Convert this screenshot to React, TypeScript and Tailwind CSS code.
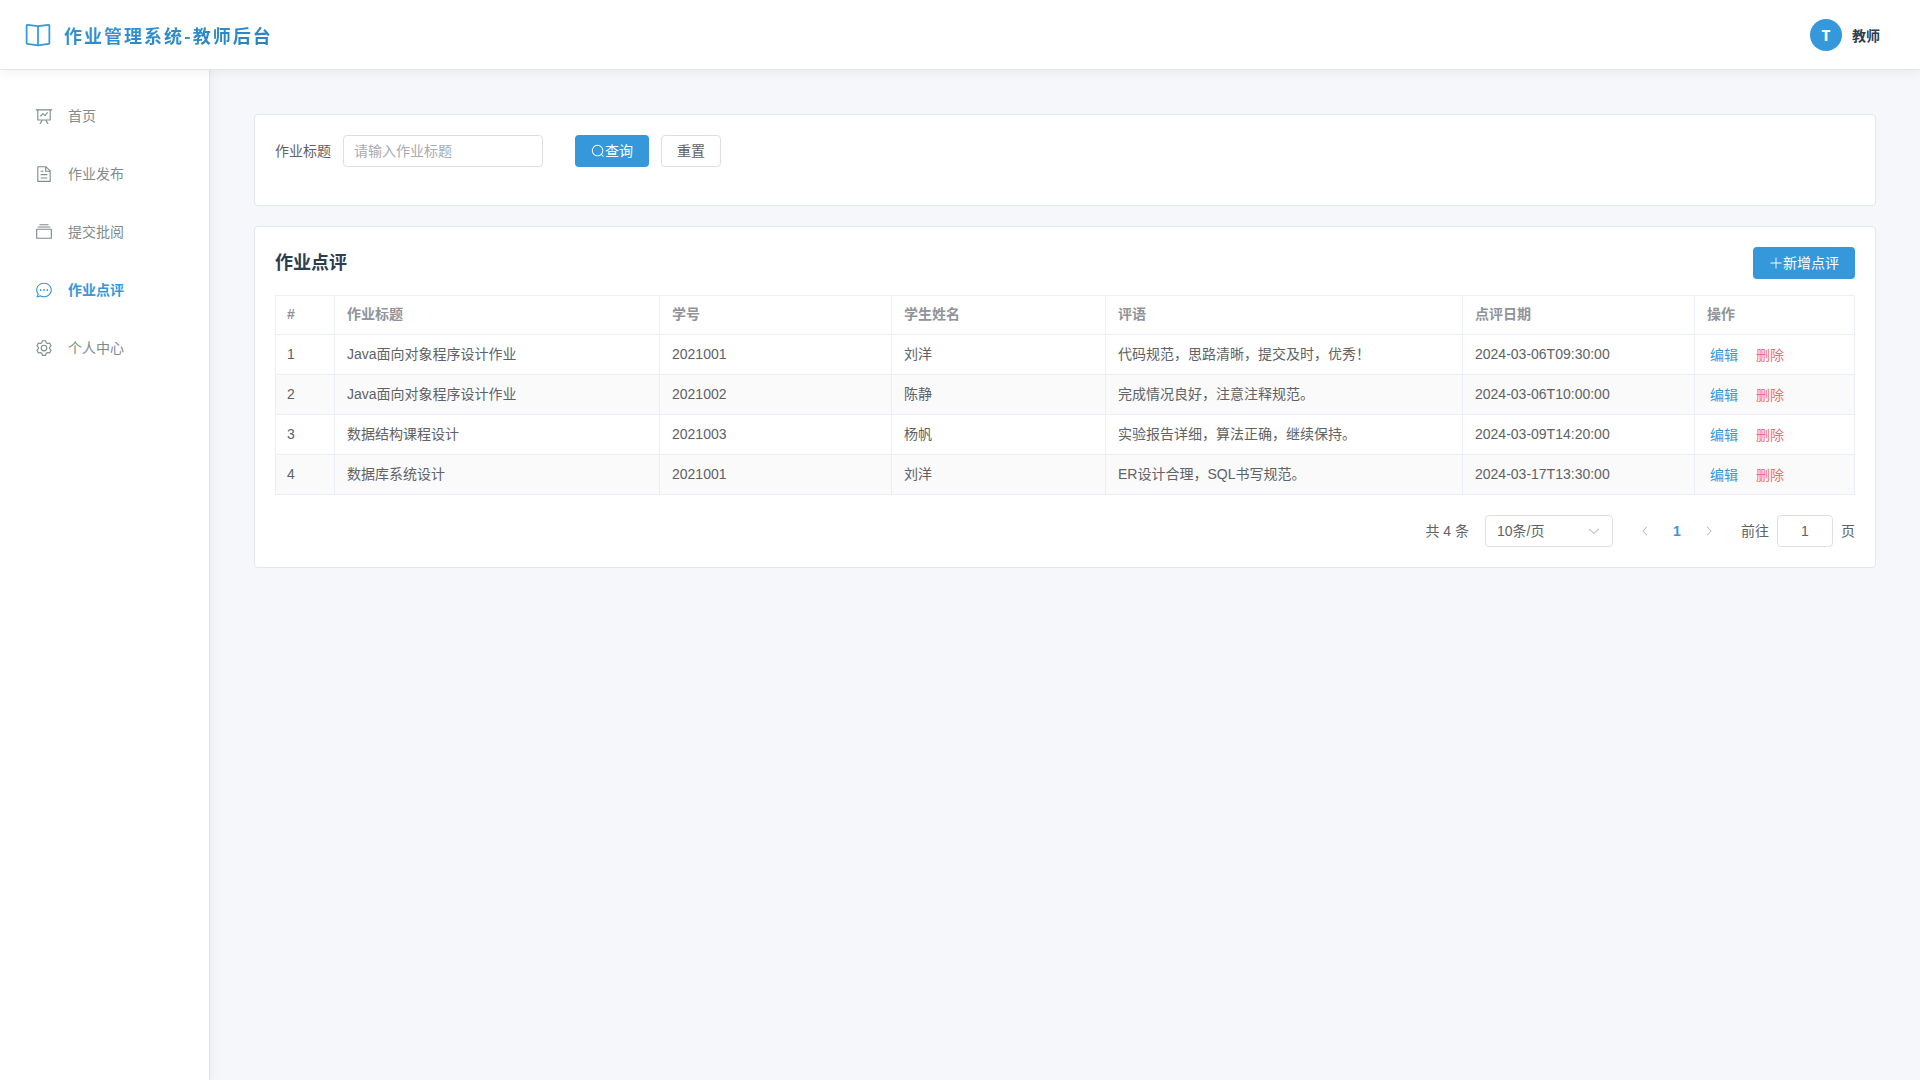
import { useState } from 'react';

const icons = {
  reading: [
    'm512 863.36 384-54.848v-638.72L525.568 222.72a96 96 0 0 1-27.136 0L128 169.792v638.72zM137.024 106.432l370.432 52.928a32 32 0 0 0 9.088 0l370.432-52.928A64 64 0 0 1 960 169.792v638.72a64 64 0 0 1-54.976 63.36l-388.48 55.488a32 32 0 0 1-9.088 0l-388.48-55.488A64 64 0 0 1 64 808.512v-638.72a64 64 0 0 1 73.024-63.36z',
    'M480 192h64v704h-64z',
  ],
  dataLine: [
    'M359.168 768H160a32 32 0 0 1-32-32V192H64a32 32 0 0 1 0-64h896a32 32 0 1 1 0 64h-64v544a32 32 0 0 1-32 32H665.216l110.848 192h-73.856L591.36 768H433.024L322.176 960H248.32zM832 192H192v512h640zM342.656 534.656a32 32 0 1 1-45.312-45.312L444.992 341.76l125.44 94.08L679.04 300.032a32 32 0 1 1 49.92 39.936L581.632 524.224 451.008 426.24 342.656 534.592z',
  ],
  document: [
    'M832 384H576V128H192v768h640zm-26.496-64L640 154.496V320zM160 64h480l256 256v608a32 32 0 0 1-32 32H160a32 32 0 0 1-32-32V96a32 32 0 0 1 32-32m160 448h384v64H320zm0-192h160v64H320zm0 384h384v64H320z',
  ],
  files: [
    'M128 384v448h768V384zm-32-64h832a32 32 0 0 1 32 32v512a32 32 0 0 1-32 32H96a32 32 0 0 1-32-32V352a32 32 0 0 1 32-32m64-128h704v64H160zm96-128h512v64H256z',
  ],
  chat: [
    'm174.72 855.68 135.296-45.12 23.68 11.84C388.096 849.536 448.576 864 512 864c211.84 0 384-166.784 384-352S723.84 160 512 160 128 326.784 128 512c0 69.12 24.96 139.264 70.848 199.232l22.08 28.8-46.272 115.584zm-45.248 82.56A32 32 0 0 1 89.6 896l58.368-145.92C94.72 680.32 64 596.864 64 512 64 299.904 256 96 512 96s448 203.904 448 416-192 416-448 416a461.06 461.06 0 0 1-206.912-48.384l-175.616 58.56z',
    'M512 563.2a51.2 51.2 0 1 1 0-102.4 51.2 51.2 0 0 1 0 102.4m192 0a51.2 51.2 0 1 1 0-102.4 51.2 51.2 0 0 1 0 102.4m-384 0a51.2 51.2 0 1 1 0-102.4 51.2 51.2 0 0 1 0 102.4',
  ],
  setting: [
    'M600.704 64a32 32 0 0 1 30.464 22.208l35.2 109.376c14.784 7.232 28.928 15.36 42.432 24.512l112.384-24.192a32 32 0 0 1 34.432 15.36L944.32 364.8a32 32 0 0 1-4.032 37.504l-77.12 85.12a357.12 357.12 0 0 1 0 49.024l77.12 85.248a32 32 0 0 1 4.032 37.504l-88.704 153.6a32 32 0 0 1-34.432 15.296L708.8 803.904c-13.44 9.088-27.648 17.28-42.368 24.512l-35.264 109.376A32 32 0 0 1 600.704 960H423.296a32 32 0 0 1-30.464-22.208L357.696 828.48a351.616 351.616 0 0 1-42.56-24.64l-112.32 24.256a32 32 0 0 1-34.432-15.36L79.68 659.2a32 32 0 0 1 4.032-37.504l77.12-85.248a357.12 357.12 0 0 1 0-48.896l-77.12-85.248A32 32 0 0 1 79.68 364.8l88.704-153.6a32 32 0 0 1 34.432-15.296l112.32 24.256c13.568-9.152 27.776-17.408 42.56-24.64l35.2-109.312A32 32 0 0 1 423.232 64H600.64zm-23.424 64H446.72l-36.352 113.088-24.512 11.968a294.113 294.113 0 0 0-34.816 20.096l-22.656 15.36-116.224-25.088-65.28 113.152 79.68 88.192-1.92 27.136a293.12 293.12 0 0 0 0 40.192l1.92 27.136-79.808 88.192 65.344 113.152 116.224-25.024 22.656 15.296a294.113 294.113 0 0 0 34.816 20.096l24.512 11.968L446.72 896h130.688l36.48-113.152 24.448-11.904a288.282 288.282 0 0 0 34.752-20.096l22.592-15.296 116.288 25.024 65.28-113.152-79.744-88.192 1.92-27.136a293.12 293.12 0 0 0 0-40.256l-1.92-27.136 79.808-88.128-65.344-113.152-116.288 24.96-22.592-15.232a287.616 287.616 0 0 0-34.752-20.096l-24.448-11.904L577.344 128zM512 320a192 192 0 1 1 0 384 192 192 0 0 1 0-384m0 64a128 128 0 1 0 0 256 128 128 0 0 0 0-256',
  ],
  search: [
    'm795.904 750.72 124.992 124.928a32 32 0 0 1-45.248 45.248L750.656 795.904a416 416 0 1 1 45.248-45.248zM480 832a352 352 0 1 0 0-704 352 352 0 0 0 0 704',
  ],
  plus: [
    'M480 480V128a32 32 0 0 1 64 0v352h352a32 32 0 1 1 0 64H544v352a32 32 0 1 1-64 0V544H128a32 32 0 0 1 0-64z',
  ],
  arrowDown: [
    'M831.872 340.864 512 652.672 192.128 340.864a30.592 30.592 0 0 0-42.752 0 29.12 29.12 0 0 0 0 41.6L489.664 714.24a32 32 0 0 0 44.672 0l340.288-331.712a29.12 29.12 0 0 0 0-41.728 30.592 30.592 0 0 0-42.752 0z',
  ],
};

type IconName = keyof typeof icons;

function Icon({ name, className }: { name: IconName; className: string }) {
  return (
    <svg viewBox="0 0 1024 1024" fill="currentColor" className={className} aria-hidden="true">
      {icons[name].map((d) => (
        <path key={d} d={d} />
      ))}
    </svg>
  );
}

const menuItems: { label: string; icon: IconName; href: string }[] = [
  { label: '首页', icon: 'dataLine', href: '#home' },
  { label: '作业发布', icon: 'document', href: '#publish' },
  { label: '提交批阅', icon: 'files', href: '#submissions' },
  { label: '作业点评', icon: 'chat', href: '#comments' },
  { label: '个人中心', icon: 'setting', href: '#profile' },
];

const columns = [
  { label: '#', width: 'w-[60px]' },
  { label: '作业标题', width: 'w-[325px]' },
  { label: '学号', width: 'w-[232px]' },
  { label: '学生姓名', width: 'w-[214px]' },
  { label: '评语', width: '' },
  { label: '点评日期', width: 'w-[232px]' },
  { label: '操作', width: 'w-[160px]' },
];

const comments = [
  { title: 'Java面向对象程序设计作业', no: '2021001', name: '刘洋', text: '代码规范，思路清晰，提交及时，优秀！', date: '2024-03-06T09:30:00' },
  { title: 'Java面向对象程序设计作业', no: '2021002', name: '陈静', text: '完成情况良好，注意注释规范。', date: '2024-03-06T10:00:00' },
  { title: '数据结构课程设计', no: '2021003', name: '杨帆', text: '实验报告详细，算法正确，继续保持。', date: '2024-03-09T14:20:00' },
  { title: '数据库系统设计', no: '2021001', name: '刘洋', text: 'ER设计合理，SQL书写规范。', date: '2024-03-17T13:30:00' },
];

const cellBase = 'h-10 border-r border-b border-[#ebeef5] px-3';
const cell = `${cellBase} pb-0.5 first:border-l first:pl-[11px]`;

function Header() {
  return (
    <header className="relative z-20 flex h-[70px] shrink-0 items-center justify-between border-b border-[#e1e5e9] bg-white pr-10 pl-6 font-['Noto_Sans_CJK_SC',sans-serif] shadow-[0_2px_12px_rgba(0,0,0,0.06)]">
      <div className="flex items-center gap-3">
        <Icon name="reading" className="size-7 text-[#3498db]" />
        <h1 className="bg-linear-to-br from-[#3498db] to-[#2980b9] bg-clip-text text-lg font-bold tracking-[2px] text-transparent">
          作业管理系统-教师后台
        </h1>
      </div>
      <div className="flex items-center gap-2.5">
        <span className="flex size-8 items-center justify-center rounded-full bg-[#3498db] text-sm font-black text-white">T</span>
        <span className="text-sm font-bold text-[#2c3e50]">教师</span>
      </div>
    </header>
  );
}

function Sidebar() {
  const [active, setActive] = useState('作业点评');

  return (
    <aside className="z-10 w-[210px] shrink-0 border-r border-[#e1e5e9] bg-white pt-5 shadow-[2px_0_8px_rgba(0,0,0,0.05)]">
      <nav className="flex flex-col gap-1.5">
        {menuItems.map((item) => (
          <a
            key={item.label}
            href={item.href}
            onClick={() => setActive(item.label)}
            className={`flex h-[52px] items-center gap-3 px-8 text-sm ${
              active === item.label ? 'font-bold text-[#3498db]' : 'text-[#7f8c8d]'
            }`}
          >
            <span className="flex w-6 justify-center">
              <Icon name={item.icon} className="size-[18px]" />
            </span>
            {item.label}
          </a>
        ))}
      </nav>
    </aside>
  );
}

function SearchCard() {
  const [keyword, setKeyword] = useState('');

  return (
    <form
      onSubmit={(e) => e.preventDefault()}
      className="flex items-center rounded border border-[#e4e7ed] bg-white px-5 pt-5 pb-[38px]"
    >
      <label htmlFor="keyword" className="mr-3 text-sm text-[#606266]">
        作业标题
      </label>
      <input
        id="keyword"
        value={keyword}
        onChange={(e) => setKeyword(e.target.value)}
        placeholder="请输入作业标题"
        className="mr-8 h-8 w-[200px] rounded border border-[#dcdfe6] px-2.5 text-sm text-[#606266] outline-none placeholder:text-[#a8abb2]"
      />
      <button type="submit" className="mr-3 flex h-8 items-center rounded bg-[#3498db] px-4 text-sm text-white">
        <Icon name="search" className="size-3.5" />
        查询
      </button>
      <button
        type="button"
        onClick={() => setKeyword('')}
        className="h-8 rounded border border-[#dcdfe6] bg-white px-[15px] text-sm text-[#606266]"
      >
        重置
      </button>
    </form>
  );
}

function CommentTable() {
  return (
    <div className="overflow-x-auto">
      <table className="w-full table-fixed border-separate border-spacing-0 text-left text-sm text-[#606266]">
        <thead>
          <tr>
            {columns.map((col) => (
              <th key={col.label} className={`${cell} ${col.width} border-t font-bold text-[#909399]`}>
                {col.label}
              </th>
            ))}
          </tr>
        </thead>
        <tbody>
          {comments.map((row, i) => (
            <tr key={row.date} className="even:bg-[#fafafa]">
              <td className={cell}>{i + 1}</td>
              <td className={cell}>{row.title}</td>
              <td className={cell}>{row.no}</td>
              <td className={cell}>{row.name}</td>
              <td className={cell}>{row.text}</td>
              <td className={cell}>{row.date}</td>
              <td className={cellBase}>
                <div className="flex gap-3">
                  <button type="button" className="px-[3px] text-[#3498db]">编辑</button>
                  <button type="button" className="px-[3px] text-[#f56c6c]">删除</button>
                </div>
              </td>
            </tr>
          ))}
        </tbody>
      </table>
    </div>
  );
}

function Pagination() {
  const [page, setPage] = useState('1');

  return (
    <div className="mt-5 flex items-center justify-end text-sm text-[#606266]">
      <span className="mr-4">共 4 条</span>
      <div className="relative mr-4">
        <select
          aria-label="每页条数"
          defaultValue="10"
          className="block h-8 w-32 appearance-none rounded border border-[#dcdfe6] bg-white px-[11px] outline-none"
        >
          <option value="10">10条/页</option>
          <option value="20">20条/页</option>
          <option value="50">50条/页</option>
        </select>
        <Icon name="arrowDown" className="pointer-events-none absolute top-[9px] right-3 size-3.5 text-[#a8abb2]" />
      </div>
      <button type="button" disabled aria-label="上一页" className="flex size-8 items-center justify-center text-[#a8abb2]">
        <Icon name="arrowDown" className="size-3 rotate-90" />
      </button>
      <button type="button" className="size-8 font-bold text-[#3498db]">1</button>
      <button type="button" disabled aria-label="下一页" className="mr-4 flex size-8 items-center justify-center text-[#a8abb2]">
        <Icon name="arrowDown" className="size-3 -rotate-90" />
      </button>
      <label htmlFor="page">前往</label>
      <input
        id="page"
        inputMode="numeric"
        value={page}
        onChange={(e) => setPage(e.target.value)}
        className="mx-2 h-8 w-14 rounded border border-[#dcdfe6] text-center outline-none"
      />
      <span>页</span>
    </div>
  );
}

export default function App() {
  return (
    <div className="flex min-h-screen flex-col bg-[#f5f7fa] font-['Liberation_Sans','Noto_Sans_CJK_SC',sans-serif]">
      <Header />
      <div className="flex flex-1">
        <Sidebar />
        <main className="flex min-w-0 flex-1 flex-col gap-5 p-11">
          <SearchCard />
          <section className="rounded border border-[#e4e7ed] bg-white p-5">
            <div className="mb-4 flex items-center justify-between">
              <h2 className="text-lg font-bold text-[#2c3e50]">作业点评</h2>
              <button type="button" className="flex h-8 items-center rounded bg-[#3498db] px-4 text-sm text-white">
                <Icon name="plus" className="size-3.5" />
                新增点评
              </button>
            </div>
            <CommentTable />
            <Pagination />
          </section>
        </main>
      </div>
    </div>
  );
}
